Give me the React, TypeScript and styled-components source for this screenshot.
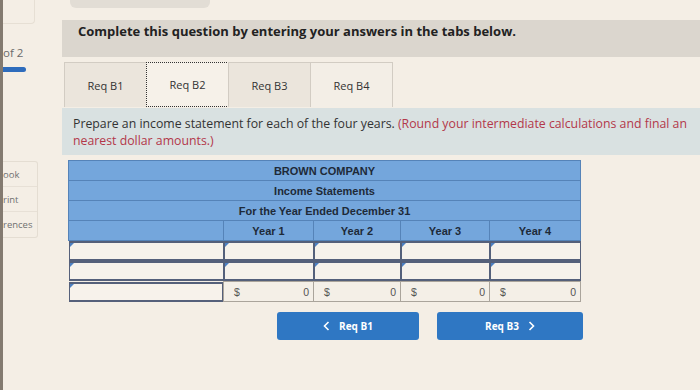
import React from "react";
import styled, { createGlobalStyle } from "styled-components";

const GlobalStyle = createGlobalStyle`
  html, body { margin: 0; padding: 0; width: 700px; height: 390px; overflow: hidden; background: #f4eee5; }
  #root { width: 700px; height: 390px; }
  * { box-sizing: border-box; }
`;

const Frame = styled.div`
  display: flex;
  width: 700px;
  height: 390px;
  overflow: hidden;
  border-left: 3px solid #837a70;
  background: #f4eee5;
  font-family: "Open Sans", "Liberation Sans", sans-serif;
`;

const Sidebar = styled.div`
  width: 35px;
  flex: none;
  display: flex;
  flex-direction: column;
`;

const SideTopBox = styled.div`
  height: 24px;
  width: 32px;
  border: 1px solid #e6dfd4;
  border-left: none;
  border-top: none;
  border-radius: 0 0 4px 0;
`;

const PageLabel = styled.div`
  margin-top: 23px;
  font-size: 11.5px;
  line-height: 12px;
  color: #6a6a6a;
`;

const Progress = styled.div`
  margin-top: 8px;
  width: 23px;
  height: 5px;
  border-radius: 0 3px 3px 0;
  background: #2e6cbc;
`;

const LinkBox = styled.div`
  margin-top: 89px;
  width: 35px;
  border: 1px solid #e4ddd2;
  border-left: none;
  border-radius: 0 3px 3px 0;
`;

const LinkItem = styled.div<{ $last?: boolean }>`
  height: 25px;
  display: flex;
  align-items: center;
  font-size: 9.5px;
  color: #707070;
  border-bottom: ${(p) => (p.$last ? "none" : "1px solid #e7e0d6")};
  overflow: hidden;
  white-space: nowrap;
`;

const Main = styled.div`
  flex: 1;
  margin-left: 24px;
  display: flex;
  flex-direction: column;
  min-width: 0;
`;

const PrevTab = styled.div`
  margin-left: 8px;
  width: 140px;
  height: 8px;
  background: #e2ddd5;
  border-radius: 0 0 6px 6px;
`;

const Banner = styled.div`
  margin-top: 12px;
  height: 37px;
  background: #dbd6ce;
  padding: 2px 16px;
  font-weight: 700;
  font-size: 13px;
  color: #222;
  white-space: nowrap;
`;

const Tabs = styled.div`
  margin-top: 5px;
  margin-left: 3px;
  display: flex;
  height: 45px;
`;

const Tab = styled.div<{ $active?: boolean; $light?: boolean }>`
  width: 83px;
  display: flex;
  align-items: center;
  justify-content: center;
  font-size: 11px;
  color: #333;
  background: ${(p) => (p.$active ? "#f6f1e9" : p.$light ? "#f3eee6" : "#ebe5dc")};
  border: ${(p) => (p.$active ? "1px dotted #333" : "1px solid #d2ccc3")};
  border-bottom: ${(p) => (p.$active ? "1px dotted #333" : "none")};
  margin-left: -1px;
`;

const Instruction = styled.div`
  margin-top: 1px;
  height: 47px;
  background: #d9e1e1;
  padding: 7px 11px;
  font-size: 12.3px;
  line-height: 17px;
  color: #333;
  white-space: nowrap;
  overflow: hidden;
`;

const Red = styled.span`
  color: #b3384a;
`;

const Table = styled.table`
  margin-top: 5px;
  margin-left: 6px;
  width: 512px;
  border-collapse: collapse;
  table-layout: fixed;
  font-family: "Liberation Sans", Arial, sans-serif;
`;

const HeadCell = styled.td`
  height: 20px;
  background: #74a6dc;
  border: 1px solid #5583b8;
  text-align: center;
  font-weight: 700;
  font-size: 11px;
  color: #1e2a38;
  padding: 0;
`;

const BodyCell = styled.td`
  padding: 0;
  height: 20px;
`;

const InputBox = styled.div`
  position: relative;
  height: 20px;
  background: #f7f2eb;
  border-top: 2px solid #55607a;
  border-bottom: 2px solid #55607a;
  border-left: 1px solid #55607a;
  border-right: 1px solid #55607a;
  &::before {
    content: "";
    position: absolute;
    top: 0;
    left: 0;
    border-top: 4px solid #4d80c2;
    border-right: 4px solid transparent;
  }
`;

const AmountCell = styled.td`
  height: 20px;
  padding: 0 4px 0 10px;
  border: 1px solid #aaa49b;
  background: #f4efe7;
  font-size: 10.5px;
  color: #555;
`;

const Amount = styled.div`
  display: flex;
  justify-content: space-between;
`;

const Buttons = styled.div`
  margin-top: 10px;
  padding-left: 215px;
  display: flex;
  gap: 18px;
`;

const NavButton = styled.button<{ $w: number }>`
  width: ${(p) => p.$w}px;
  height: 28px;
  border: none;
  border-radius: 3px;
  background: #2f77c3;
  color: #fff;
  font-family: "Open Sans", "Liberation Sans", sans-serif;
  font-weight: 700;
  font-size: 10px;
  display: flex;
  align-items: center;
  justify-content: center;
  gap: 9px;
  padding: 0;
`;

const Chevron = ({ dir }: { dir: "left" | "right" }) => (
  <svg width="7" height="10" viewBox="0 0 7 10">
    <path
      d={dir === "left" ? "M5.5 1 L1.5 5 L5.5 9" : "M1.5 1 L5.5 5 L1.5 9"}
      fill="none"
      stroke="#fff"
      strokeWidth="1.6"
    />
  </svg>
);

const years = ["Year 1", "Year 2", "Year 3", "Year 4"];

export default function App() {
  return (
    <>
      <GlobalStyle />
      <Frame>
        <Sidebar>
          <SideTopBox />
          <PageLabel>of 2</PageLabel>
          <Progress />
          <LinkBox>
            <LinkItem>ook</LinkItem>
            <LinkItem>rint</LinkItem>
            <LinkItem $last>rences</LinkItem>
          </LinkBox>
        </Sidebar>
        <Main>
          <PrevTab />
          <Banner>Complete this question by entering your answers in the tabs below.</Banner>
          <Tabs>
            <Tab>Req B1</Tab>
            <Tab $active>Req B2</Tab>
            <Tab>Req B3</Tab>
            <Tab $light>Req B4</Tab>
          </Tabs>
          <Instruction>
            Prepare an income statement for each of the four years.{" "}
            <Red>(Round your intermediate calculations and final an</Red>
            <br />
            <Red>nearest dollar amounts.)</Red>
          </Instruction>
          <Table>
            <colgroup>
              <col style={{ width: 155 }} />
              <col style={{ width: 90 }} />
              <col style={{ width: 87 }} />
              <col style={{ width: 89 }} />
              <col style={{ width: 91 }} />
            </colgroup>
            <tbody>
              <tr>
                <HeadCell colSpan={5}>BROWN COMPANY</HeadCell>
              </tr>
              <tr>
                <HeadCell colSpan={5}>Income Statements</HeadCell>
              </tr>
              <tr>
                <HeadCell colSpan={5}>For the Year Ended December 31</HeadCell>
              </tr>
              <tr>
                <HeadCell />
                {years.map((y) => (
                  <HeadCell key={y}>{y}</HeadCell>
                ))}
              </tr>
              {[0, 1].map((r) => (
                <tr key={r}>
                  {[0, 1, 2, 3, 4].map((c) => (
                    <BodyCell key={c}>
                      <InputBox />
                    </BodyCell>
                  ))}
                </tr>
              ))}
              <tr>
                <BodyCell>
                  <InputBox />
                </BodyCell>
                {years.map((y) => (
                  <AmountCell key={y}>
                    <Amount>
                      <span>$</span>
                      <span>0</span>
                    </Amount>
                  </AmountCell>
                ))}
              </tr>
            </tbody>
          </Table>
          <Buttons>
            <NavButton $w={142}>
              <Chevron dir="left" />
              Req B1
            </NavButton>
            <NavButton $w={146}>
              Req B3
              <Chevron dir="right" />
            </NavButton>
          </Buttons>
        </Main>
      </Frame>
    </>
  );
}
